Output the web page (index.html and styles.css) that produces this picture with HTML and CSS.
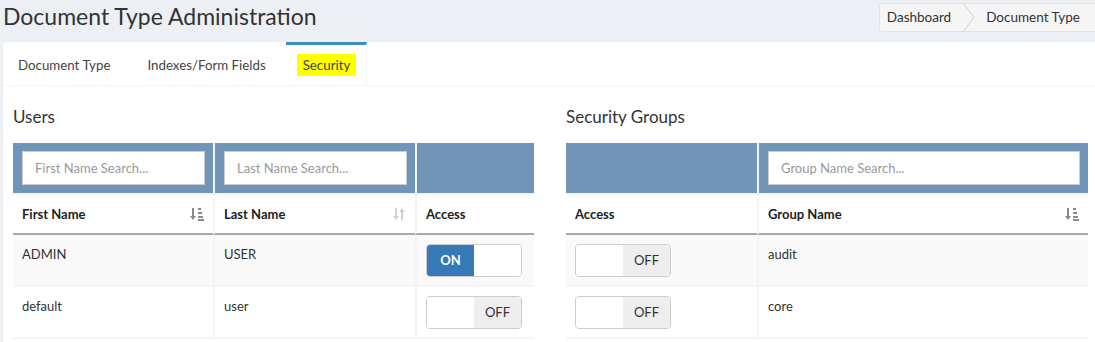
FILE: index.html
```html
<!DOCTYPE html>
<html lang="en">
<head>
    <meta charset="UTF-8">
    <title>Document Type Administration</title>
    <link rel="stylesheet" href="styles.css">
</head>
<body>
    <div class="content-header">
        <h1>Document Type Administration</h1>
        <ol class="breadcrumb">
            <li>Dashboard</li>
            <li class="sep">
                <svg width="14" height="29" viewBox="0 0 14 29"><polyline points="1,0 12,14.5 1,29" fill="none" stroke="#d2d2d2" stroke-width="1"/></svg>
            </li>
            <li class="current">Document Type</li>
        </ol>
    </div>

    <div class="nav-tabs-custom">
        <ul class="nav-tabs">
            <li><a>Document Type</a></li>
            <li><a>Indexes/Form Fields</a></li>
            <li class="active"><a><mark>Security</mark></a></li>
        </ul>

        <div class="tab-content">
            <div class="col">
                <h4>Users</h4>
                <table class="grid users">
                    <thead>
                        <tr class="filters">
                            <th class="w-first"><input type="text" placeholder="First Name Search..."></th>
                            <th class="w-last"><input type="text" placeholder="Last Name Search..."></th>
                            <th></th>
                        </tr>
                        <tr class="titles">
                            <th>
                                <div class="th-sort">First Name
                                    <svg class="sort-icon" width="14" height="14" viewBox="0 0 14 14"><path d="M3 1v10" stroke="#8a8a8a" stroke-width="2"/><path d="M0 9l3 4 3-4z" fill="#8a8a8a"/><rect x="8" y="1" width="3" height="2" fill="#8a8a8a"/><rect x="8" y="5" width="4" height="2" fill="#8a8a8a"/><rect x="8" y="9" width="5" height="2" fill="#8a8a8a"/><rect x="8" y="12" width="6" height="2" fill="#8a8a8a"/></svg>
                                </div>
                            </th>
                            <th>
                                <div class="th-sort">Last Name
                                    <svg class="sort-icon" width="14" height="14" viewBox="0 0 14 14"><path d="M4 1v10" stroke="#d0d0d0" stroke-width="2"/><path d="M1 9l3 4 3-4z" fill="#d0d0d0"/><path d="M10 3v10" stroke="#d0d0d0" stroke-width="2"/><path d="M7 5l3-4 3 4z" fill="#d0d0d0"/></svg>
                                </div>
                            </th>
                            <th>Access</th>
                        </tr>
                    </thead>
                    <tbody>
                        <tr class="odd">
                            <td>ADMIN</td>
                            <td>USER</td>
                            <td><div class="switch"><span class="half on-half">ON</span><span class="half"></span></div></td>
                        </tr>
                        <tr>
                            <td>default</td>
                            <td>user</td>
                            <td><div class="switch"><span class="half"></span><span class="half off-half">OFF</span></div></td>
                        </tr>
                    </tbody>
                </table>
            </div>

            <div class="col">
                <h4>Security Groups</h4>
                <table class="grid groups">
                    <thead>
                        <tr class="filters">
                            <th class="w-access"></th>
                            <th><input type="text" placeholder="Group Name Search..."></th>
                        </tr>
                        <tr class="titles">
                            <th>Access</th>
                            <th>
                                <div class="th-sort">Group Name
                                    <svg class="sort-icon" width="14" height="14" viewBox="0 0 14 14"><path d="M3 1v10" stroke="#8a8a8a" stroke-width="2"/><path d="M0 9l3 4 3-4z" fill="#8a8a8a"/><rect x="8" y="1" width="3" height="2" fill="#8a8a8a"/><rect x="8" y="5" width="4" height="2" fill="#8a8a8a"/><rect x="8" y="9" width="5" height="2" fill="#8a8a8a"/><rect x="8" y="12" width="6" height="2" fill="#8a8a8a"/></svg>
                                </div>
                            </th>
                        </tr>
                    </thead>
                    <tbody>
                        <tr class="odd">
                            <td><div class="switch"><span class="half"></span><span class="half off-half">OFF</span></div></td>
                            <td>audit</td>
                        </tr>
                        <tr>
                            <td><div class="switch"><span class="half"></span><span class="half off-half">OFF</span></div></td>
                            <td>core</td>
                        </tr>
                    </tbody>
                </table>
            </div>
        </div>
    </div>
</body>
</html>
```

FILE: styles.css
```css
body {
    margin: 0;
    background-color: #ecf0f5;
    font-family: Lato, "Liberation Sans", sans-serif;
    font-size: 13px;
    color: #333;
    overflow: hidden;
}
.content-header {
    display: flex;
    justify-content: space-between;
    align-items: flex-start;
    padding: 3px 0 0 3px;
    height: 39px;
}
.content-header h1 {
    margin: 0;
    font-size: 23px;
    font-weight: normal;
    line-height: 26px;
    color: #333;
}
.breadcrumb {
    display: flex;
    align-items: center;
    margin: 0;
    padding: 0 0 0 7px;
    list-style: none;
    height: 27px;
    background-color: #f5f5f5;
    border: 1px solid #e3e3e3;
    border-right: none;
    border-radius: 3px 0 0 3px;
    font-size: 13.5px;
}
.breadcrumb li {
    line-height: 27px;
}
.breadcrumb .sep {
    display: flex;
    margin: 0 10px 0 11px;
}
.breadcrumb .current {
    padding-right: 15px;
}
.nav-tabs-custom {
    margin-left: 3px;
    background-color: white;
    border-radius: 3px 0 0 0;
    height: 300px;
}
.nav-tabs {
    display: flex;
    margin: 0;
    padding: 0;
    list-style: none;
    border-bottom: 1px solid #f4f4f4;
    font-size: 13.3px;
}
.nav-tabs li {
    margin-right: 7px;
    border-top: 3px solid transparent;
}
.nav-tabs li a {
    display: block;
    padding: 0 15px;
    line-height: 40px;
    color: #444;
}
.nav-tabs li.active {
    margin-left: -2px;
    border-top-color: #3c8dbc;
    border-right: 1px solid #f4f4f4;
}
.nav-tabs li.active a {
    padding: 0 10px 0 11px;
}
mark {
    background-color: #ffff00;
    color: #444;
    padding: 3px 6px;
}
.tab-content {
    display: grid;
    grid-template-columns: 521px 522px;
    column-gap: 32px;
    padding: 10px 7px 0 10px;
}
.col h4 {
    margin: 10px 0 15px 0;
    font-size: 17px;
    font-weight: normal;
    line-height: 22px;
}
.grid {
    width: 100%;
    border-collapse: separate;
    border-spacing: 0;
}
.grid th, .grid td {
    padding: 8px 8px 8px 9px;
    text-align: left;
    vertical-align: top;
    line-height: 20px;
    border-left: 2px solid #f4f4f4;
    border-bottom: 2px solid #f4f4f4;
}
.grid td {
    padding-top: 9px;
}
.grid th:first-child, .grid td:first-child {
    border-left: none;
}
.filters th {
    background-color: #7195b8;
}
.titles th {
    padding-top: 9px;
    padding-bottom: 9px;
    font-weight: bold;
    color: #222;
    border-bottom: 2px solid #a9a9a9;
}
.th-sort {
    display: flex;
    justify-content: space-between;
    align-items: center;
}
.sort-icon {
    margin-right: 1px;
}
.w-first, .w-last {
    width: 183px;
}
.w-access {
    width: 174px;
}
input {
    box-sizing: border-box;
    display: block;
    width: 100%;
    height: 34px;
    padding: 6px 12px;
    border: 1px solid #ccc;
    font-family: Lato, "Liberation Sans", sans-serif;
    font-size: 13px;
    color: #555;
}
input::placeholder {
    color: #999;
}
tbody tr.odd td {
    background-color: #f9f9f9;
}
.switch {
    display: flex;
    width: 94px;
    height: 31px;
    border: 1px solid #ccc;
    border-radius: 4px;
    overflow: hidden;
}
.switch .half {
    flex: 1;
    text-align: center;
    line-height: 31px;
    background-color: white;
}
.switch .on-half {
    background-color: #337ab7;
    color: white;
    font-weight: bold;
}
.switch .off-half {
    background-color: #eee;
    color: #333;
}
```
